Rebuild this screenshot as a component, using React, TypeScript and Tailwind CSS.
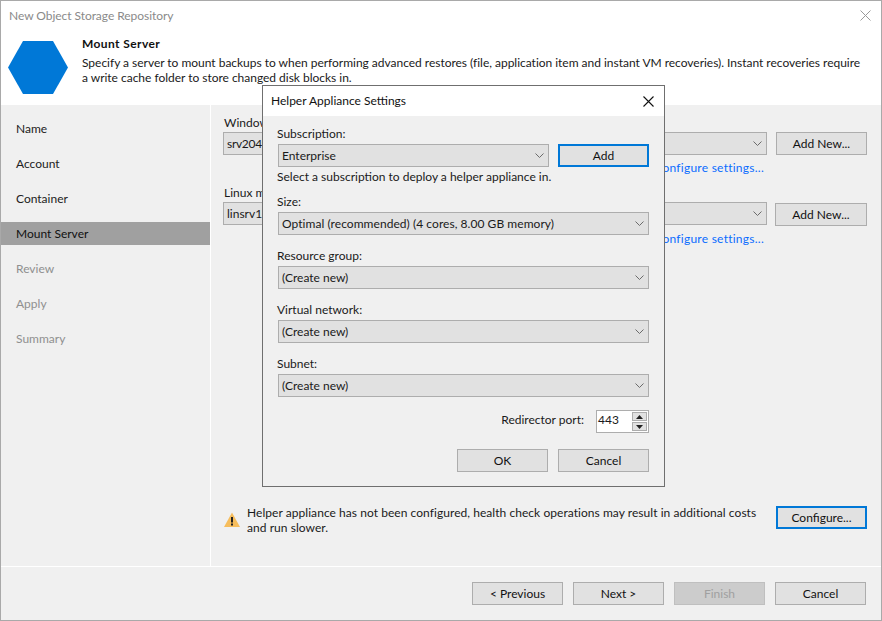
import React from "react";

const font = { fontFamily: 'Lato, "Noto Sans", sans-serif' };

function Chevron() {
  return (
    <svg width="9" height="6" viewBox="0 0 9 6" fill="none">
      <path d="M0.5 0.5 L4.5 4.5 L8.5 0.5" stroke="#6b6b6b" strokeWidth="1" />
    </svg>
  );
}

function Combo({ text, className = "", textClass = "" }: { text: string; className?: string; textClass?: string }) {
  return (
    <div className={`h-[23px] border border-[#adadad] bg-[#e1e1e1] flex items-center justify-between pl-[3px] pr-[4px] text-[12px] text-[#1a1a1a] ${className}`}>
      <span className={textClass}>{text}</span>
      <Chevron />
    </div>
  );
}

function Btn({ text, focus, disabled, className = "" }: { text: string; focus?: boolean; disabled?: boolean; className?: string }) {
  const look = focus
    ? "border-2 border-[#0078d7] bg-[#e1e1e1] text-[#111]"
    : disabled
      ? "border border-[#bfbfbf] bg-[#cccccc] text-[#a0a0a0]"
      : "border border-[#adadad] bg-[#e1e1e1] text-[#111]";
  return (
    <div className={`w-[91px] h-[23px] flex items-center justify-center text-[12px] ${look} ${className}`}>{text}</div>
  );
}

function Nav({ text, active, dim }: { text: string; active?: boolean; dim?: boolean }) {
  return (
    <div className={`h-[23px] mb-[12px] pl-[15px] flex items-center text-[12px] ${active ? "bg-[#a0a0a0] text-[#111]" : dim ? "text-[#8f8f8f]" : "text-[#222]"}`}>
      {text}
    </div>
  );
}

function Field({ label, text, textClass }: { label: string; text: string; textClass?: string }) {
  return (
    <div className="mb-[13px]">
      <div className="h-[18px] leading-[16px] text-[12px] text-[#1a1a1a]">{label}</div>
      <Combo text={text} className="ml-[1px]" textClass={textClass} />
    </div>
  );
}

function Modal() {
  return (
    <div className="absolute left-[261px] top-[84px] w-[403px] h-[402px] border border-[#6f6f6f] bg-[#f0f0f0] flex flex-col">
      <div className="h-[30px] bg-white flex items-center justify-between pl-[8px] pr-[10px] text-[12px] text-[#111] shrink-0">
        <span>Helper Appliance Settings</span>
        <svg width="11" height="11" viewBox="0 0 11 11" fill="none">
          <path d="M0.5 0.5 L10.5 10.5 M10.5 0.5 L0.5 10.5" stroke="#111" strokeWidth="1.1" />
        </svg>
      </div>
      <div className="pl-[14px] pr-[15px] pt-[10px] flex flex-col">
        <div className="h-[18px] leading-[16px] text-[12px] text-[#1a1a1a]">Subscription:</div>
        <div className="flex gap-[9px] ml-[1px]">
          <Combo text="Enterprise" className="w-[271px]" />
          <Btn text="Add" focus />
        </div>
        <div className="h-[18px] leading-[19px] text-[12px] text-[#1a1a1a] mb-[9px]">Select a subscription to deploy a helper appliance in.</div>
        <Field label="Size:" text="Optimal (recommended) (4 cores, 8.00 GB memory)" textClass="tracking-[0.05px]" />
        <Field label="Resource group:" text="(Create new)" />
        <Field label="Virtual network:" text="(Create new)" />
        <Field label="Subnet:" text="(Create new)" />
        <div className="flex items-center justify-end gap-[12px] text-[12px] text-[#1a1a1a]">
          <span className="-mt-[4px]">Redirector port:</span>
          <div className="w-[53px] h-[23px] border border-[#adadad] bg-white flex items-center justify-between pr-[1px] pl-[1px]">
            <span className="-mt-[4px]">443</span>
            <div className="w-[15px] h-[19px] flex flex-col gap-[1px]">
              <div className="flex-1 bg-[#e1e1e1] border border-[#adadad] flex items-center justify-center">
                <svg width="7" height="4" viewBox="0 0 7 4"><path d="M3.5 0 L7 4 L0 4 Z" fill="#222" /></svg>
              </div>
              <div className="flex-1 bg-[#e1e1e1] border border-[#adadad] flex items-center justify-center">
                <svg width="7" height="4" viewBox="0 0 7 4"><path d="M0 0 L7 0 L3.5 4 Z" fill="#222" /></svg>
              </div>
            </div>
          </div>
        </div>
        <div className="flex justify-end gap-[10px] mt-[16px]">
          <Btn text="OK" />
          <Btn text="Cancel" />
        </div>
      </div>
    </div>
  );
}

export default function App() {
  return (
    <div style={font} className="relative w-[882px] h-[621px] border border-[#a9a9a9] bg-[#f0f0f0] flex flex-col overflow-hidden">
      <div className="h-[104px] bg-white shrink-0 flex flex-col">
        <div className="h-[29px] pl-[8px] pr-[10px] flex items-center justify-between text-[12px] text-[#8a8a8a]">
          <span className="tracking-[-0.05px]">New Object Storage Repository</span>
          <svg width="11" height="11" viewBox="0 0 11 11" fill="none">
            <path d="M0.5 0.5 L10.5 10.5 M10.5 0.5 L0.5 10.5" stroke="#9a9a9a" strokeWidth="1" />
          </svg>
        </div>
        <div className="flex pl-[7px]">
          <svg width="60" height="53" viewBox="0 0 60 53" className="mt-[11px] shrink-0">
            <path d="M15 0 L45 0 L60 26.5 L45 53 L15 53 L0 26.5 Z" fill="#0078d7" />
          </svg>
          <div className="ml-[14px] w-[784px] pt-[6px]">
            <div className="text-[12px] font-bold text-[#111] leading-[16px] tracking-[0.4px]">Mount Server</div>
            <div className="text-[12px] text-[#1a1a1a] leading-[15px] mt-[3px] tracking-[-0.02px]">
              Specify a server to mount backups to when performing advanced restores (file, application item and instant VM recoveries). Instant recoveries require a write cache folder to store changed disk blocks in.
            </div>
          </div>
        </div>
      </div>
      <div className="flex flex-1 min-h-0">
        <div className="w-[209px] pt-[12px] shrink-0">
          <Nav text="Name" />
          <Nav text="Account" />
          <Nav text="Container" />
          <Nav text="Mount Server" active />
          <Nav text="Review" dim />
          <Nav text="Apply" dim />
          <Nav text="Summary" dim />
        </div>
        <div className="flex-1 border-l border-white pl-[12px] pr-[14px] pt-[9px] flex flex-col">
          <div className="h-[18px] leading-[18px] text-[12px] text-[#1a1a1a] ml-[1px]">Windows mount server:</div>
          <div className="flex gap-[9px]">
            <Combo text="srv2049" className="flex-1" textClass="tracking-[-0.3px]" />
            <Btn text="Add New..." />
          </div>
          <div className="h-[18px] leading-[18px] text-[12px] text-[#0a6cff] text-right pr-[103px] mt-[4px] tracking-[0.25px]">Configure settings...</div>
          <div className="h-[18px] leading-[18px] text-[12px] text-[#1a1a1a] mt-[7px] ml-[1px]">Linux mount server:</div>
          <div className="flex gap-[8px]">
            <Combo text="linsrv1" className="flex-1" />
            <Btn text="Add New..." className="w-[92px] mt-[1px]" />
          </div>
          <div className="h-[18px] leading-[18px] text-[12px] text-[#0a6cff] text-right pr-[103px] mt-[4px] tracking-[0.25px]">Configure settings...</div>
          <div className="mt-auto flex items-start mb-[31px]">
            <svg width="16" height="15" viewBox="0 0 16 15" className="mt-[6px] ml-[1px] shrink-0">
              <path d="M8 0.5 L16 15 L0 15 Z" fill="#f6bd5c" />
              <rect x="7" y="5" width="2" height="5.5" fill="#222" />
              <rect x="7" y="11.5" width="2" height="2" fill="#222" />
            </svg>
            <div className="ml-[7px] -mt-[1px] w-[520px] text-[12px] leading-[15px] text-[#1a1a1a] tracking-[0.05px]">
              Helper appliance has not been configured, health check operations may result in additional costs and run slower.
            </div>
            <Btn text="Configure..." focus className="ml-auto" />
          </div>
        </div>
      </div>
      <div className="h-[54px] border-t border-white shrink-0 flex justify-end gap-[10px] pr-[15px] pt-[15px]">
        <Btn text="< Previous" />
        <Btn text="Next >" />
        <Btn text="Finish" disabled />
        <Btn text="Cancel" />
      </div>
      <Modal />
    </div>
  );
}
